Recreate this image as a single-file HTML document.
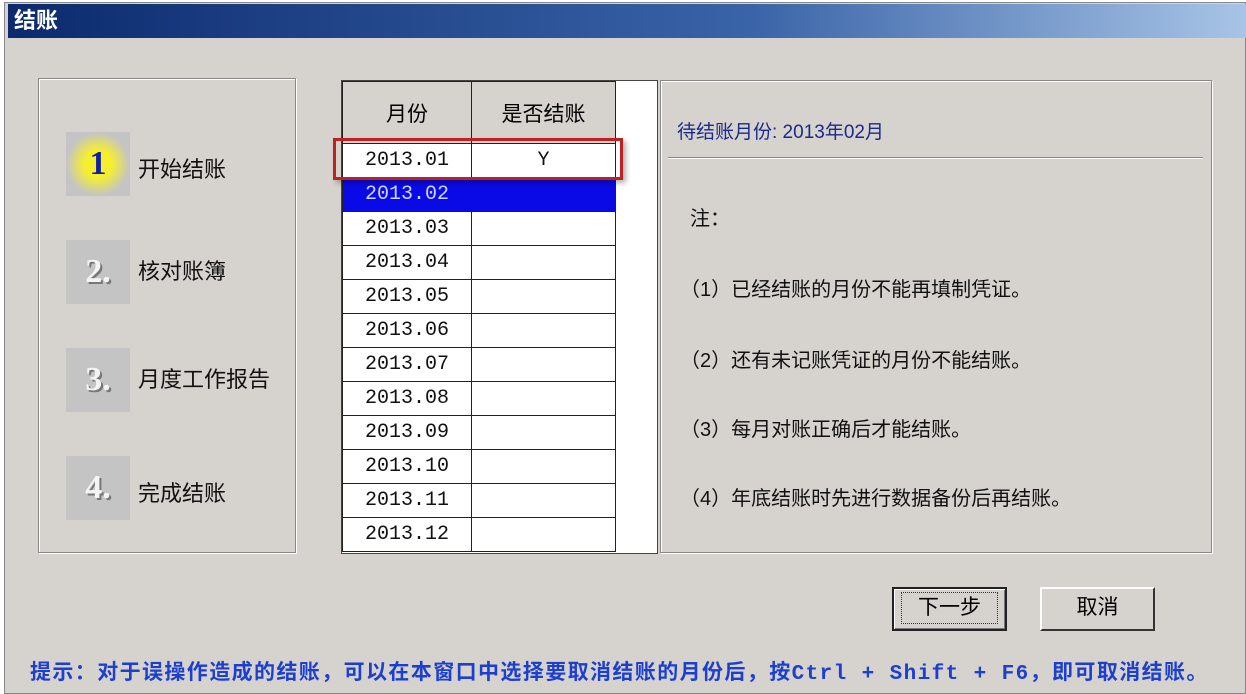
<!DOCTYPE html>
<html><head><meta charset="utf-8"><style>
*{margin:0;padding:0;box-sizing:border-box}
body{width:1246px;height:694px;background:#fff;position:relative;overflow:hidden;font-family:"Liberation Sans","Noto Sans CJK SC",sans-serif}
.win{position:absolute;left:4px;top:2px;width:1242px;height:692px;background:#d6d3ce;border:1px solid #888}
.title{position:absolute;left:8px;top:4px;width:1238px;height:34px;background:linear-gradient(90deg,#0c2a6e,#3a64a8 60%,#a8c4e6);color:#fff;font-weight:bold;font-size:22px;line-height:34px;padding-left:6px}
.abs{position:absolute}
.panel{border:1px solid #888;box-shadow:inset 1px 1px 0 #fff,1px 1px 0 #fff}
.icon{position:absolute;left:66px;width:64px;height:64px;background:#c4c4c4;color:#f4f4f4;font:bold 34px "Liberation Serif",serif;text-align:center;line-height:64px;text-shadow:2px 2px 0 #777}
.lbl{position:absolute;left:138px;font-size:22px;color:#111}
table{border-collapse:collapse;position:absolute;left:342px;top:81px}
td{border:1px solid #222;height:34px;font:20px "Liberation Mono","Noto Sans CJK SC",monospace;text-align:center;background:#fff;color:#111;padding:0}
th{border:1px solid #222;height:62px;font-size:21px;font-weight:normal;background:#d6d3ce}
.sel td{background:#0a0ae6;color:#cfd8ff}
.note{position:absolute;left:680px;font-size:20px;color:#111;font-family:"Liberation Sans","Noto Sans CJK SC",sans-serif}
.btn{position:absolute;top:587px;width:115px;height:44px;background:#d6d3ce;border:2px solid;border-color:#fff #333 #333 #fff;font-size:21px;text-align:center;line-height:38px}
</style></head><body>
<div class="win"></div>
<div class="title">结账</div>
<div class="abs panel" style="left:38px;top:78px;width:258px;height:475px"></div>
<div class="icon" style="top:132px;background:radial-gradient(circle,#f5ef30 30%,#c4c4c4 70%);color:#1020a0;text-shadow:none">1</div>
<div class="lbl" style="top:152px">开始结账</div>
<div class="icon" style="top:240px">2.</div>
<div class="lbl" style="top:254px">核对账簿</div>
<div class="icon" style="top:348px">3.</div>
<div class="lbl" style="top:362px">月度工作报告</div>
<div class="icon" style="top:456px">4.</div>
<div class="lbl" style="top:476px">完成结账</div>
<div class="abs" style="left:341px;top:80px;width:317px;height:474px;background:#fff;border:1px solid #444"></div>
<table>
<tr><th style="width:129px">月份</th><th style="width:144px">是否结账</th></tr>
<tr><td>2013.01</td><td>Y</td></tr>
<tr class="sel"><td>2013.02</td><td></td></tr>
<tr><td>2013.03</td><td></td></tr>
<tr><td>2013.04</td><td></td></tr>
<tr><td>2013.05</td><td></td></tr>
<tr><td>2013.06</td><td></td></tr>
<tr><td>2013.07</td><td></td></tr>
<tr><td>2013.08</td><td></td></tr>
<tr><td>2013.09</td><td></td></tr>
<tr><td>2013.10</td><td></td></tr>
<tr><td>2013.11</td><td></td></tr>
<tr><td>2013.12</td><td></td></tr>
</table>
<div class="abs" style="left:333px;top:138px;width:290px;height:42px;border:3px solid #c02020;box-shadow:3px 3px 5px rgba(0,0,0,.3)"></div>
<div class="abs panel" style="left:660px;top:80px;width:552px;height:473px"></div>
<div class="abs" style="left:677px;top:117px;font-size:19px;color:#1a2a8a">待结账月份: 2013年02月</div>
<div class="abs" style="left:668px;top:157px;width:535px;height:2px;border-top:1px solid #888;border-bottom:1px solid #fff"></div>
<div class="note" style="top:202px;left:690px">注：</div>
<div class="note" style="top:273px">（1）已经结账的月份不能再填制凭证。</div>
<div class="note" style="top:344px">（2）还有未记账凭证的月份不能结账。</div>
<div class="note" style="top:413px">（3）每月对账正确后才能结账。</div>
<div class="note" style="top:482px">（4）年底结账时先进行数据备份后再结账。</div>
<div class="btn" style="left:892px;border:2px solid #222;box-shadow:inset 1px 1px 0 #fff,inset -1px -1px 0 #777"><span style="display:inline-block;border:1px dotted #333;padding:0 16px;line-height:30px;margin-top:3px">下一步</span></div>
<div class="btn" style="left:1040px">取消</div>
<div class="abs" style="left:30px;top:656px;font:bold 21px 'Liberation Mono','Noto Sans CJK SC',monospace;letter-spacing:1.4px;color:#1d3fd0;white-space:nowrap">提示：对于误操作造成的结账，可以在本窗口中选择要取消结账的月份后，按Ctrl + Shift + F6，即可取消结账。</div>
</body></html>
